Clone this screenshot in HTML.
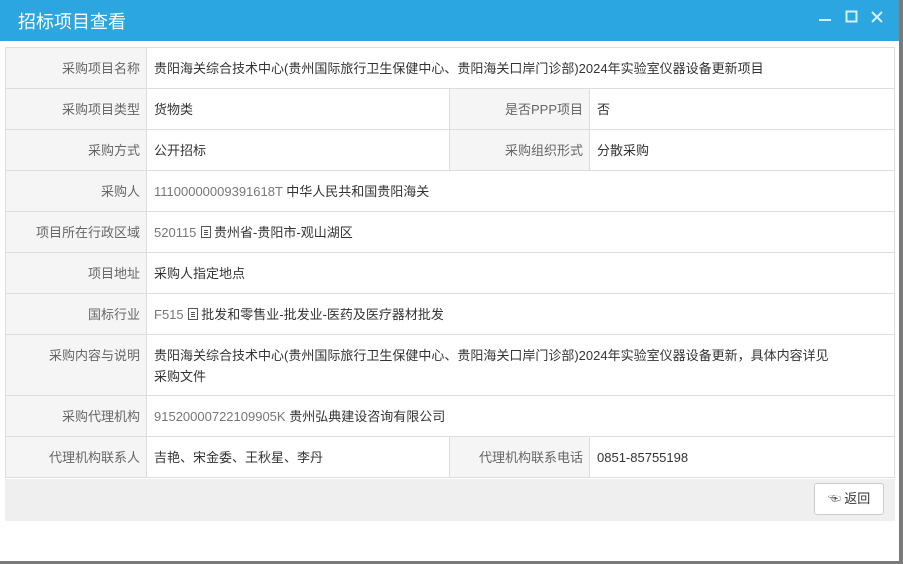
<!DOCTYPE html>
<html><head><meta charset="utf-8"><style>
body{margin:0;width:903px;height:564px;background:#fff;overflow:hidden;position:relative;font-family:"Liberation Sans","Noto Sans CJK SC",sans-serif;font-size:13px}
.side{position:absolute;left:899px;top:0;width:4px;height:564px;background:#7a7a7a}
.bot{position:absolute;left:0;top:561px;width:903px;height:3px;background:#7a7a7a}
.hd{position:absolute;left:0;top:0;width:899px;height:41px;background:#2ba6e1;color:#fff}
.hd .t{position:absolute;left:18px;top:8px;font-size:18px}
table{position:absolute;left:5px;top:47px;width:889px;border-collapse:collapse;table-layout:fixed}
td{border:1px solid #ddd;height:41px;padding:0 7px;color:#333;line-height:21px;box-sizing:border-box}
td.l{background:#f5f5f5;color:#666;text-align:right;padding-right:6px}
.g{color:#777}
.ft{position:absolute;left:5px;top:479px;width:890px;height:42px;background:#efefef}
.btn{position:absolute;right:11px;top:4px;width:70px;height:32px;border:1px solid #ccc;border-radius:3px;background:#fff;box-sizing:border-box;text-align:center;line-height:30px;color:#333}
.doc{display:inline-block;width:10px;height:12px;border:1px solid #555;box-sizing:border-box;vertical-align:-1px;margin:0 3px 0 1px;background:linear-gradient(#555,#555) 2px 3px/4px 1px no-repeat,linear-gradient(#555,#555) 2px 5px/4px 1px no-repeat,linear-gradient(#555,#555) 2px 7px/4px 1px no-repeat}
</style></head><body>
<div class="hd"><span class="t">招标项目查看</span>
<svg style="position:absolute;left:815px;top:8px" width="70" height="20" viewBox="0 0 70 20"><path d="M4 12h12" stroke="#d6effa" stroke-width="2"/><rect x="31.5" y="3.5" width="10" height="10" fill="none" stroke="#d6effa" stroke-width="2"/><path d="M57 4l10 10M67 4l-10 10" stroke="#d6effa" stroke-width="2"/></svg></div>
<table>
<colgroup><col style="width:141px"><col style="width:303px"><col style="width:140px"><col style="width:305px"></colgroup>
<tr><td class="l">采购项目名称</td><td colspan="3">贵阳海关综合技术中心(贵州国际旅行卫生保健中心、贵阳海关口岸门诊部)2024年实验室仪器设备更新项目</td></tr>
<tr><td class="l">采购项目类型</td><td>货物类</td><td class="l">是否PPP项目</td><td>否</td></tr>
<tr><td class="l">采购方式</td><td>公开招标</td><td class="l">采购组织形式</td><td>分散采购</td></tr>
<tr><td class="l">采购人</td><td colspan="3"><span class="g">11100000009391618T</span> 中华人民共和国贵阳海关</td></tr>
<tr><td class="l">项目所在行政区域</td><td colspan="3"><span class="g">520115</span> <span class="doc"></span>贵州省-贵阳市-观山湖区</td></tr>
<tr><td class="l">项目地址</td><td colspan="3">采购人指定地点</td></tr>
<tr><td class="l">国标行业</td><td colspan="3"><span class="g">F515</span> <span class="doc"></span>批发和零售业-批发业-医药及医疗器材批发</td></tr>
<tr><td class="l" style="height:61px;vertical-align:top;padding-top:10px">采购内容与说明</td><td colspan="3" style="vertical-align:top;padding-top:10px">贵阳海关综合技术中心(贵州国际旅行卫生保健中心、贵阳海关口岸门诊部)2024年实验室仪器设备更新，具体内容详见<br>采购文件</td></tr>
<tr><td class="l">采购代理机构</td><td colspan="3"><span class="g">91520000722109905K</span> 贵州弘典建设咨询有限公司</td></tr>
<tr><td class="l">代理机构联系人</td><td>吉艳、宋金委、王秋星、李丹</td><td class="l">代理机构联系电话</td><td>0851-85755198</td></tr>
</table>
<div class="ft"><div class="btn">☜ 返回</div></div>
<div class="side"></div><div class="bot"></div>
</body></html>
